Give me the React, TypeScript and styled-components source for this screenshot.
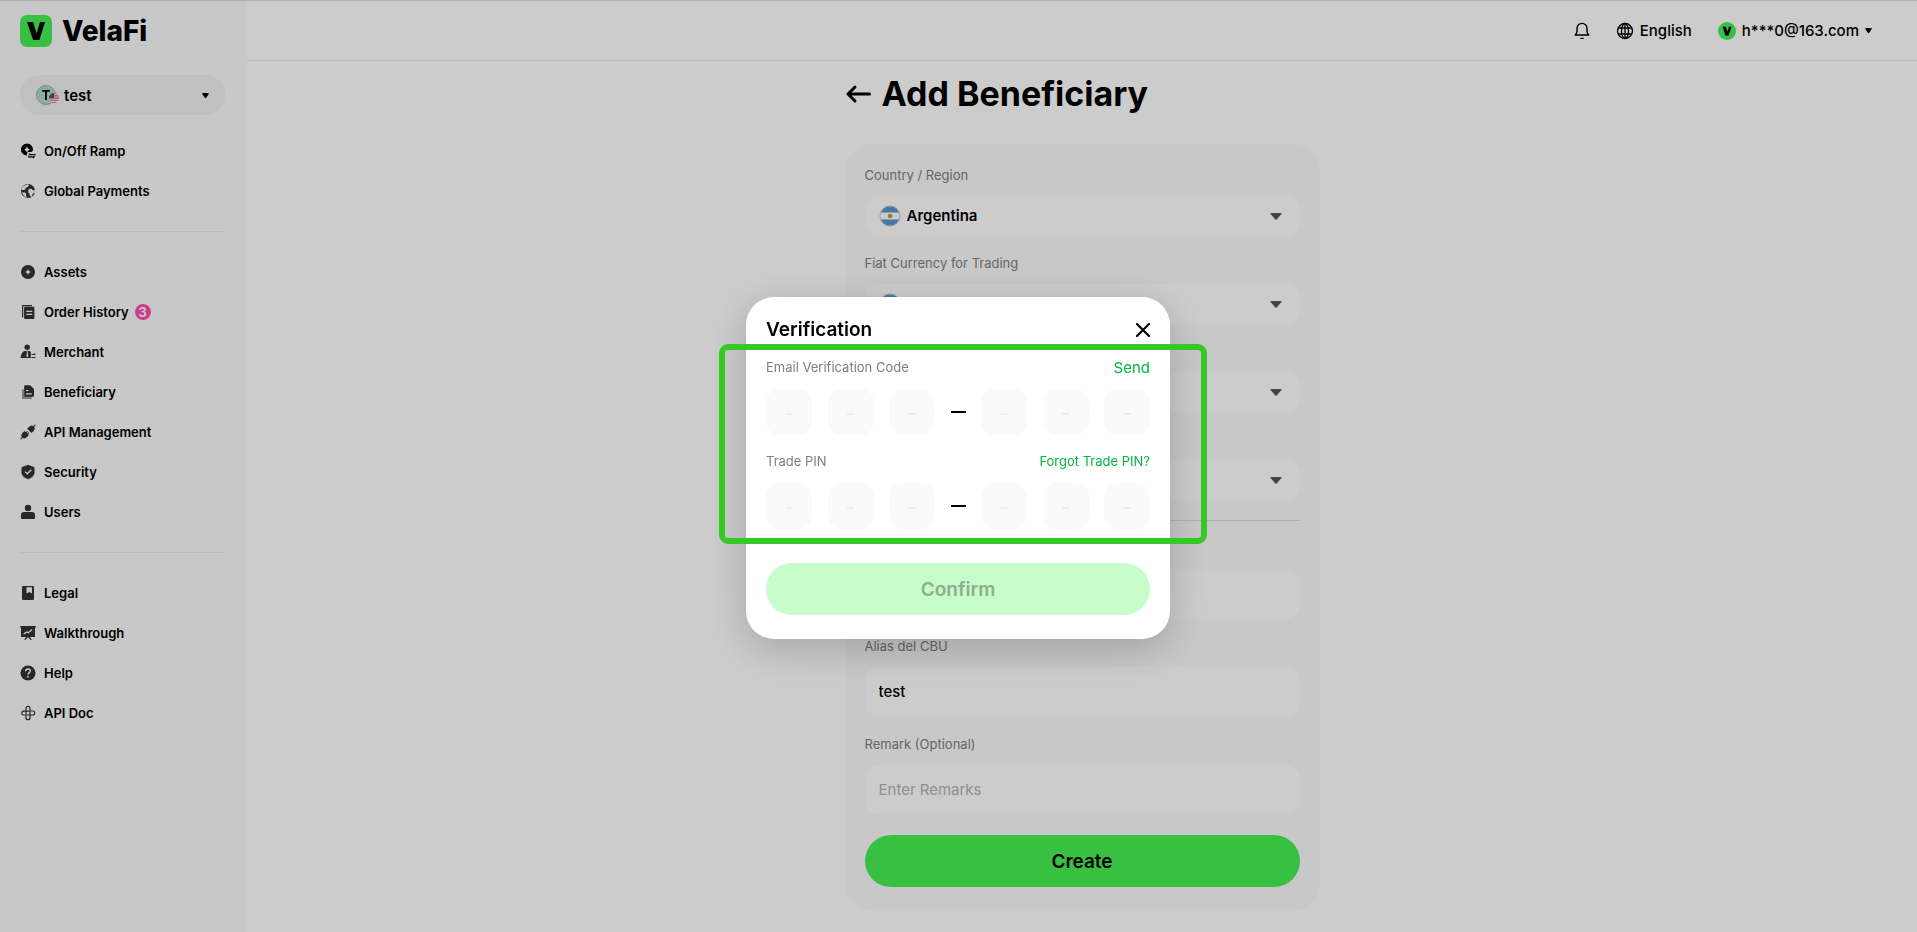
import React, { useId } from "react";
import styled, { createGlobalStyle } from "styled-components";

const GlobalStyle = createGlobalStyle`
  *, *::before, *::after { box-sizing: border-box; }
  body {
    margin: 0;
    background: #fff;
    color: #000;
    font-family: Inter, "Liberation Sans", sans-serif;
    font-size: 15px;
  }
  button, input, select { font: inherit; color: inherit; }
  button { border: 0; background: none; padding: 0; cursor: pointer; }
  a { color: inherit; text-decoration: none; }
`;

const Shell = styled.div`
  display: flex;
  min-height: 100vh;
  border-top: 1px solid #ddd;
`;

const Sidebar = styled.aside`
  flex: 0 0 247px;
  padding: 14px 22px 20px 20px;
  background: #fafafa;
`;

const Brand = styled.a`
  display: flex;
  align-items: center;
  gap: 10px;
  height: 32px;
  font-size: 28px;
  line-height: 32px;
  font-weight: 800;
`;

const AccountButton = styled.button`
  display: flex;
  align-items: center;
  gap: 4px;
  width: 100%;
  height: 40px;
  margin: 28px 0 16px;
  padding: 0 16px;
  border-radius: 20px;
  background: #f0f0f0;
  font-weight: 600;

  span { flex: 1; text-align: left; }
`;

const NavList = styled.ul`
  list-style: none;
  margin: 0;
  padding: 0;

  & + & {
    margin-top: 20px;
    padding-top: 20px;
    border-top: 1px solid #ebebeb;
  }
`;

const NavLink = styled.a`
  display: flex;
  align-items: center;
  gap: 8px;
  height: 40px;
  font-size: 13px;
  font-weight: 600;

  svg { color: #333; flex: none; }
`;

const Badge = styled.span`
  display: grid;
  place-items: center;
  width: 16px;
  height: 16px;
  margin-left: -2px;
  border-radius: 50%;
  background: #fa4fad;
  color: #fff;
  font-size: 13px;
  line-height: 16px;
`;

const Page = styled.div`
  flex: 1;
  min-width: 0;
`;

const TopBar = styled.header`
  display: flex;
  justify-content: flex-end;
  align-items: center;
  gap: 26px;
  height: 60px;
  padding: 0 45px;
  border-bottom: 1px solid #ebebeb;
`;

const TopButton = styled.button`
  display: flex;
  align-items: center;
  gap: 6px;
  height: 32px;
  font-weight: 500;
`;

const Content = styled.main`
  max-width: 475px;
  margin: 0 auto;
  padding: 12px 0 20px;
`;

const TitleRow = styled.div`
  display: flex;
  align-items: center;
  gap: 10px;
  height: 42px;
  margin-bottom: 29px;
`;

const BackButton = styled.button`
  display: flex;
`;

const Title = styled.h1`
  margin: 0;
  font-size: 34px;
  line-height: 40px;
  font-weight: 700;
`;

const Card = styled.form`
  display: flex;
  flex-direction: column;
  gap: 20px;
  padding: 24px 20px;
  border-radius: 28px;
  background: #fafafa;
`;

const Field = styled.div`
  display: flex;
  flex-direction: column;
  gap: 14px;
`;

const FieldLabel = styled.label`
  color: #808080;
  font-size: 13px;
  line-height: 14px;
`;

const Control = styled.div<{ $tall?: boolean }>`
  display: flex;
  align-items: center;
  gap: 6px;
  height: ${(p) => (p.$tall ? 50 : 40)}px;
  padding: 0 18px 0 14px;
  border-radius: 14px;
  background: #fff;

  > svg { flex: none; }
`;

const Select = styled.select`
  flex: 1;
  min-width: 0;
  height: 100%;
  padding: 0 0 2px;
  border: 0;
  outline: 0;
  appearance: none;
  background: transparent;
  font-weight: 600;
`;

const TextInput = styled.input`
  flex: 1;
  min-width: 0;
  height: 100%;
  padding: 0 0 2px;
  border: 0;
  outline: 0;
  background: transparent;
  font-weight: 500;

  &::placeholder { color: #b3b3b3; font-weight: 400; opacity: 1; }
`;

const Divider = styled.hr`
  width: 100%;
  height: 1px;
  margin: 0;
  border: 0;
  background: #dcdcdc;
`;

const PrimaryButton = styled.button`
  width: 100%;
  height: 52px;
  border-radius: 26px;
  background: #46f053;
  font-size: 19px;
  font-weight: 600;

  &:disabled { background: #c7fccb; color: #8bb08e; }
`;

const Overlay = styled.div`
  position: fixed;
  inset: 0;
  display: grid;
  place-items: center;
  padding: 4px 1px 0 0;
  background: rgba(0, 0, 0, 0.2);
`;

const Dialog = styled.section`
  position: relative;
  width: 424px;
  padding: 20px 20px 24px;
  border-radius: 28px;
  background: #fff;
  box-shadow: 0 10px 40px rgba(0, 0, 0, 0.2);
`;

const DialogHeader = styled.div`
  display: flex;
  align-items: center;
  justify-content: space-between;
  height: 26px;
  margin-bottom: 14px;
`;

const DialogTitle = styled.h2`
  margin: 0;
  font-size: 19px;
  line-height: 24px;
  font-weight: 600;
`;

const CloseButton = styled.button`
  display: flex;
`;

const CodeGroup = styled.div`
  margin-bottom: 16px;
  & + & { margin-bottom: 34px; }
`;

const CodeHead = styled.div`
  display: flex;
  align-items: center;
  justify-content: space-between;
  height: 20px;
  margin: 0 0 12px;
  color: #808080;
  font-size: 13px;
`;

const CodeAction = styled.button<{ $large?: boolean }>`
  color: #00b83d;
  font-size: ${(p) => (p.$large ? 15 : 13)}px;
`;

const CodeRow = styled.div`
  display: flex;
  align-items: center;
  justify-content: space-between;
`;

const CodeBox = styled.input`
  width: 46px;
  height: 46px;
  padding: 0;
  border: 0;
  border-radius: 14px;
  outline: 0;
  background: #fafafa;
  text-align: center;
  font-size: 15px;
  font-weight: 700;

  &::placeholder { color: #ededed; opacity: 1; }
`;

const Dash = styled.span`
  width: 15px;
  height: 2px;
  background: #000;
`;

const Highlight = styled.div`
  position: absolute;
  top: 47px;
  left: -27px;
  right: -37px;
  height: 200px;
  border: 6px solid #36c926;
  border-radius: 9px;
  pointer-events: none;
`;

const LogoMark = () => (
  <svg width="32" height="32" viewBox="0 0 32 32" aria-hidden="true">
    <rect width="32" height="32" rx="7" fill="#46f053" />
    <path d="M7 7h6.200l3.300 11.600L20 7h5l-5.600 18h-6.300z" />
  </svg>
);

const AvatarV = () => (
  <svg width="18" height="18" viewBox="0 0 18 18" aria-hidden="true">
    <circle cx="9" cy="9" r="9" fill="#46f053" />
    <path d="M4.700 4.700h3.200l1.500 5 1.600-5h2.500l-2.900 8.800H7.300z" />
  </svg>
);

const AccountAvatar = () => (
  <svg width="24" height="20" viewBox="0 0 24 20" aria-hidden="true">
    <circle cx="10" cy="10" r="9.5" fill="#b0d8c6" stroke="#8fb5a6" />
    <path d="M6.200 5h7.500v1.700h-2.800V15H9V6.700H6.200z" />
    <clipPath id="us"><circle cx="18" cy="13" r="5" /></clipPath>
    <g clipPath="url(#us)">
      <path fill="#f3e6e8" d="M13 8h10v10H13z" />
      <path stroke="#e0606c" strokeWidth="1.100" d="M13 8.700h10M13 10.900h10M13 13.100h10M13 15.300h10M13 17.500h10" />
      <path fill="#41508a" d="M13 8h5v5h-5z" />
    </g>
  </svg>
);

const FlagAr = () => (
  <svg width="22" height="22" viewBox="0 0 22 22" aria-hidden="true">
    <clipPath id="ar"><circle cx="11" cy="11" r="10" /></clipPath>
    <g clipPath="url(#ar)">
      <path fill="#fff" d="M0 0h22v22H0z" />
      <path fill="#5b96cf" d="M0 0h22v7.600H0zM0 14.400h22V22H0z" />
      <circle cx="11" cy="11" r="2.300" fill="#c09a3e" />
    </g>
    <circle cx="11" cy="11" r="10" fill="none" stroke="#c4c4c4" />
  </svg>
);

const Caret = ({ size = 7 }: { size?: number }) => (
  <svg width={size} height="7" viewBox={`0 0 ${size} 7`} aria-hidden="true">
    {size > 7 ? (
      <path fill="#555" d="M1 0h10q1 0 .4.900L6.700 6.400q-.7.700-1.400 0L.6.900Q0 0 1 0z" />
    ) : (
      <path d="M.8 1h5.400q.8 0 .5.900L4.200 5.800q-.7.700-1.400 0L.3 1.900Q0 1 .8 1z" />
    )}
  </svg>
);

const Icon = ({ children }: { children: React.ReactNode }) => (
  <svg width="16" height="16" viewBox="0 0 16 16" fill="currentColor" aria-hidden="true">
    {children}
  </svg>
);

const icons = {
  ramp: (
    <Icon>
      <path fill="#000" fillRule="evenodd" d="M7 .6a6 6 0 0 1 5.900 7.200c-.5.700-1.200 1.100-2.100 1.200H8.500c-1 .2-1.500 1-1.600 1.900v1.700A6 6 0 0 1 7 .6zM7 3.700 5.900 5.400 4.200 6.600l1.700 1.100L7 9.400l1.100-1.700 1.700-1.100-1.700-1.200z" />
      <path fill="#000" d="M8 12.300h7.500v-1.200h-5.100v-1.300zM15.500 13.300H8v1.200h5v1.300z" />
    </Icon>
  ),
  globe: (
    <Icon>
      <circle cx="8" cy="8" r="7" />
      <path fill="#fafafa" d="M3.800 2.700 7.500 1.300Q9.200 1.500 8.800 2.800L7.400 4.200 5.900 4.600 5.500 6 4.300 6.900H2L1.400 6.300Q2 4 3.800 2.700zM8.600 6.300q1-.8 2.600-.6l1.300 1.200 2.400.7q.2 1.600-.3 2.900l-1.500-.2-1 1.700.4 1.300-1 .8-1.700-1.500-.3-1.900-1.300-1zM2 9.200l3 .2 1.300 1.300-.4 1.500 1 2.500q-3.500-.8-4.900-5.500z" />
    </Icon>
  ),
  assets: (
    <Icon>
      <path fillRule="evenodd" d="M8 1a7 7 0 1 1 0 14A7 7 0 0 1 8 1zm0 4.200L7 7 5.200 8 7 9l1 1.800L9 9l1.800-1L9 7z" />
    </Icon>
  ),
  orders: (
    <Icon>
      <path fill="none" stroke="currentColor" strokeWidth="1.200" d="M2.600 13.500V1.600H12" />
      <path fillRule="evenodd" d="M5 2.700h8.500q.9 0 .9.900v10.500q0 .9-.9.900H5q-.9 0-.9-.9V3.600q0-.9.900-.9zm1.300 4V8h6V6.700zm0 3V11h6V9.700z" />
    </Icon>
  ),
  merchant: (
    <Icon>
      <circle cx="7.200" cy="3.300" r="2.700" />
      <path fillRule="evenodd" d="M4.300 7h5.500l1 1.200v5.700H1q-.5 0-.4-.7C1 10.500 2.200 8 4.300 7zm2.100.5L7 8.700l-.7 3.600 1 1 1-1-.6-3.600.6-1.200z" />
      <path fill="none" stroke="currentColor" d="M11.500 10.500h3.800l-1.200-1M15.500 13.500h-4" />
    </Icon>
  ),
  beneficiary: (
    <Icon>
      <path opacity=".5" d="M2 5.500h2.200v6.800h7.500V15H3q-1 0-1-1z" />
      <path fillRule="evenodd" d="M5 1.300h5.200L14 5v7q0 .8-.8.800H5q-.8 0-.8-.8V2.100q0-.8.800-.8zM6 6v1.100h2.500V6zm0 3.200v1.200h5.800V9.200z" />
    </Icon>
  ),
  api: (
    <Icon>
      <path d="M7.200 4.700 8.600 3.200Q11 .6 13.500 1.900L15.200.4l.6.600-1.500 1.700q1.200 2.500-1.400 5L11.400 9zM8.900 11.300l-1.500 1.500q-2.400 2.600-4.900 1.300L.8 15.600l-.6-.6 1.500-1.700q-1.200-2.500 1.400-5L4.600 7z" />
      <path stroke="currentColor" strokeWidth="1.200" d="m5.800 9 1.700-1.700M7.200 10.300l1.700-1.700" />
    </Icon>
  ),
  security: (
    <Icon>
      <path d="m8 .8 6.500 2.400v5.300c0 3-2.500 5.200-6.500 6.700-4-1.500-6.500-3.700-6.500-6.700V3.200z" />
      <path fill="none" stroke="#fafafa" strokeWidth="1.300" d="m5 7.600 2.300 2.200 4-4" />
    </Icon>
  ),
  users: (
    <Icon>
      <circle cx="8" cy="4" r="3.200" />
      <path d="M4 8h8q3 0 3 3v3q0 1-1 1H2q-1 0-1-1v-3q0-3 3-3z" />
    </Icon>
  ),
  legal: (
    <Icon>
      <path fillRule="evenodd" d="M3 1h10q1 0 1 1v12q0 1-1 1H3q-1 0-1-1V2q0-1 1-1zm3.500 1.200V8.500L9.200 7 12 8.500V2.200z" />
    </Icon>
  ),
  walkthrough: (
    <Icon>
      <path d="M.3 1h15.400v1.800H15V12H9.900l2 2.700h-1.700L8.500 12.500h-1L5.800 14.700H4.100L6.100 12H1V2.800H.3z" />
      <path fill="none" stroke="#fafafa" strokeWidth="1.300" d="M3.700 9 6.500 7l1.800.8L12 4.600" />
    </Icon>
  ),
  help: (
    <Icon>
      <circle cx="8" cy="8" r="7.500" />
      <path fill="none" stroke="#fafafa" strokeWidth="1.400" d="M5.600 6.200C5.700 4.700 6.700 4 8 4s2.300.8 2.300 2C10.300 7.700 8 7.600 8 9.600" />
      <circle cx="8" cy="11.700" r=".9" fill="#fafafa" />
    </Icon>
  ),
  doc: (
    <Icon>
      <g fill="none" stroke="currentColor" strokeWidth="1.200">
        <path d="M6 9.500V3.300a2 2 0 0 1 4 0V6h2.700a2 2 0 0 1 0 4H6.500" />
        <path d="M9.800 6.100H3.300a2 2 0 0 0 0 3.900H6v2.700a2 2 0 0 0 4 0V6.800" />
      </g>
    </Icon>
  ),
};

type NavItem = { label: string; icon: keyof typeof icons; count?: number };

const navGroups: NavItem[][] = [
  [
    { label: "On/Off Ramp", icon: "ramp" },
    { label: "Global Payments", icon: "globe" },
  ],
  [
    { label: "Assets", icon: "assets" },
    { label: "Order History", icon: "orders", count: 3 },
    { label: "Merchant", icon: "merchant" },
    { label: "Beneficiary", icon: "beneficiary" },
    { label: "API Management", icon: "api" },
    { label: "Security", icon: "security" },
    { label: "Users", icon: "users" },
  ],
  [
    { label: "Legal", icon: "legal" },
    { label: "Walkthrough", icon: "walkthrough" },
    { label: "Help", icon: "help" },
    { label: "API Doc", icon: "doc" },
  ],
];

function SelectField({ label, value, flag }: { label: string; value: string; flag?: boolean }) {
  const id = useId();
  return (
    <Field>
      <FieldLabel htmlFor={id}>{label}</FieldLabel>
      <Control>
        {flag && <FlagAr />}
        <Select id={id} defaultValue={value}>
          <option>{value}</option>
        </Select>
        <Caret size={12} />
      </Control>
    </Field>
  );
}

function TextField({ label, value, placeholder }: { label: string; value?: string; placeholder?: string }) {
  const id = useId();
  return (
    <Field>
      <FieldLabel htmlFor={id}>{label}</FieldLabel>
      <Control $tall>
        <TextInput id={id} defaultValue={value} placeholder={placeholder} />
      </Control>
    </Field>
  );
}

function CodeField({ label, action, large }: { label: string; action: string; large?: boolean }) {
  const id = useId();
  const box = (n: number) => (
    <CodeBox
      key={n}
      id={n === 1 ? id : undefined}
      aria-label={`${label} digit ${n}`}
      placeholder="–"
      maxLength={1}
      inputMode="numeric"
    />
  );
  return (
    <CodeGroup>
      <CodeHead>
        <label htmlFor={id}>{label}</label>
        <CodeAction type="button" $large={large}>{action}</CodeAction>
      </CodeHead>
      <CodeRow>
        {[1, 2, 3].map(box)}
        <Dash />
        {[4, 5, 6].map(box)}
      </CodeRow>
    </CodeGroup>
  );
}

export default function App() {
  return (
    <>
      <GlobalStyle />
      <Shell>
        <Sidebar>
          <Brand href="#">
            <LogoMark />
            VelaFi
          </Brand>
          <AccountButton type="button">
            <AccountAvatar />
            <span>test</span>
            <Caret />
          </AccountButton>
          <nav>
            {navGroups.map((group) => (
              <NavList key={group[0].label}>
                {group.map((item) => (
                  <li key={item.label}>
                    <NavLink href="#">
                      {icons[item.icon]}
                      {item.label}
                      {item.count && <Badge>{item.count}</Badge>}
                    </NavLink>
                  </li>
                ))}
              </NavList>
            ))}
          </nav>
        </Sidebar>
        <Page>
          <TopBar>
            <TopButton type="button" aria-label="Notifications">
              <svg width="16" height="18" viewBox="1 0 16 20" fill="none" stroke="#000" strokeWidth="1.600" strokeLinejoin="round" aria-hidden="true">
                <path d="M1.500 14.500c1.500-1.700 2-2.700 2-4.500V7a5.500 5.500 0 0 1 11 0V10c0 1.800.5 2.800 2 4.500z" />
                <path strokeLinecap="round" d="M7.800 18.200h2.400" />
              </svg>
            </TopButton>
            <TopButton type="button">
              <svg width="18" height="18" viewBox="0 0 18 18" fill="none" stroke="#000" strokeWidth="1.300" aria-hidden="true">
                <circle cx="9" cy="9" r="7.500" />
                <ellipse cx="9" cy="9" rx="3.500" ry="7.500" />
                <path d="M9 1.500v15M2.200 6h13.600M2.200 12h13.600" />
              </svg>
              English
            </TopButton>
            <TopButton type="button">
              <AvatarV />
              h***0@163.com
              <Caret />
            </TopButton>
          </TopBar>
          <Content>
            <TitleRow>
              <BackButton type="button" aria-label="Back">
                <svg width="27" height="20" viewBox="0 0 27 20" fill="none" stroke="#000" strokeWidth="3" strokeLinecap="round" strokeLinejoin="round" aria-hidden="true">
                  <path d="M24.500 10H3M10 3 3 10l7 7" />
                </svg>
              </BackButton>
              <Title>Add Beneficiary</Title>
            </TitleRow>
            <Card>
              <SelectField label="Country / Region" value="Argentina" flag />
              <SelectField label="Fiat Currency for Trading" value="ARS" flag />
              <SelectField label="Type" value="Individual" />
              <SelectField label="Payment Method" value="CBU" />
              <Divider />
              <TextField label="CBU" />
              <TextField label="Alias del CBU" value="test" />
              <TextField label="Remark (Optional)" placeholder="Enter Remarks" />
              <PrimaryButton type="button">Create</PrimaryButton>
            </Card>
          </Content>
        </Page>
      </Shell>
      <Overlay>
        <Dialog role="dialog" aria-modal="true" aria-labelledby="dialog-title">
          <DialogHeader>
            <DialogTitle id="dialog-title">Verification</DialogTitle>
            <CloseButton type="button" aria-label="Close">
              <svg width="14" height="14" viewBox="0 0 14 14" stroke="#000" strokeWidth="2.200" strokeLinecap="round" aria-hidden="true">
                <path d="m1 1 12 12M13 1 1 13" />
              </svg>
            </CloseButton>
          </DialogHeader>
          <CodeField label="Email Verification Code" action="Send" large />
          <CodeField label="Trade PIN" action="Forgot Trade PIN?" />
          <PrimaryButton type="button" disabled>Confirm</PrimaryButton>
          <Highlight />
        </Dialog>
      </Overlay>
    </>
  );
}
